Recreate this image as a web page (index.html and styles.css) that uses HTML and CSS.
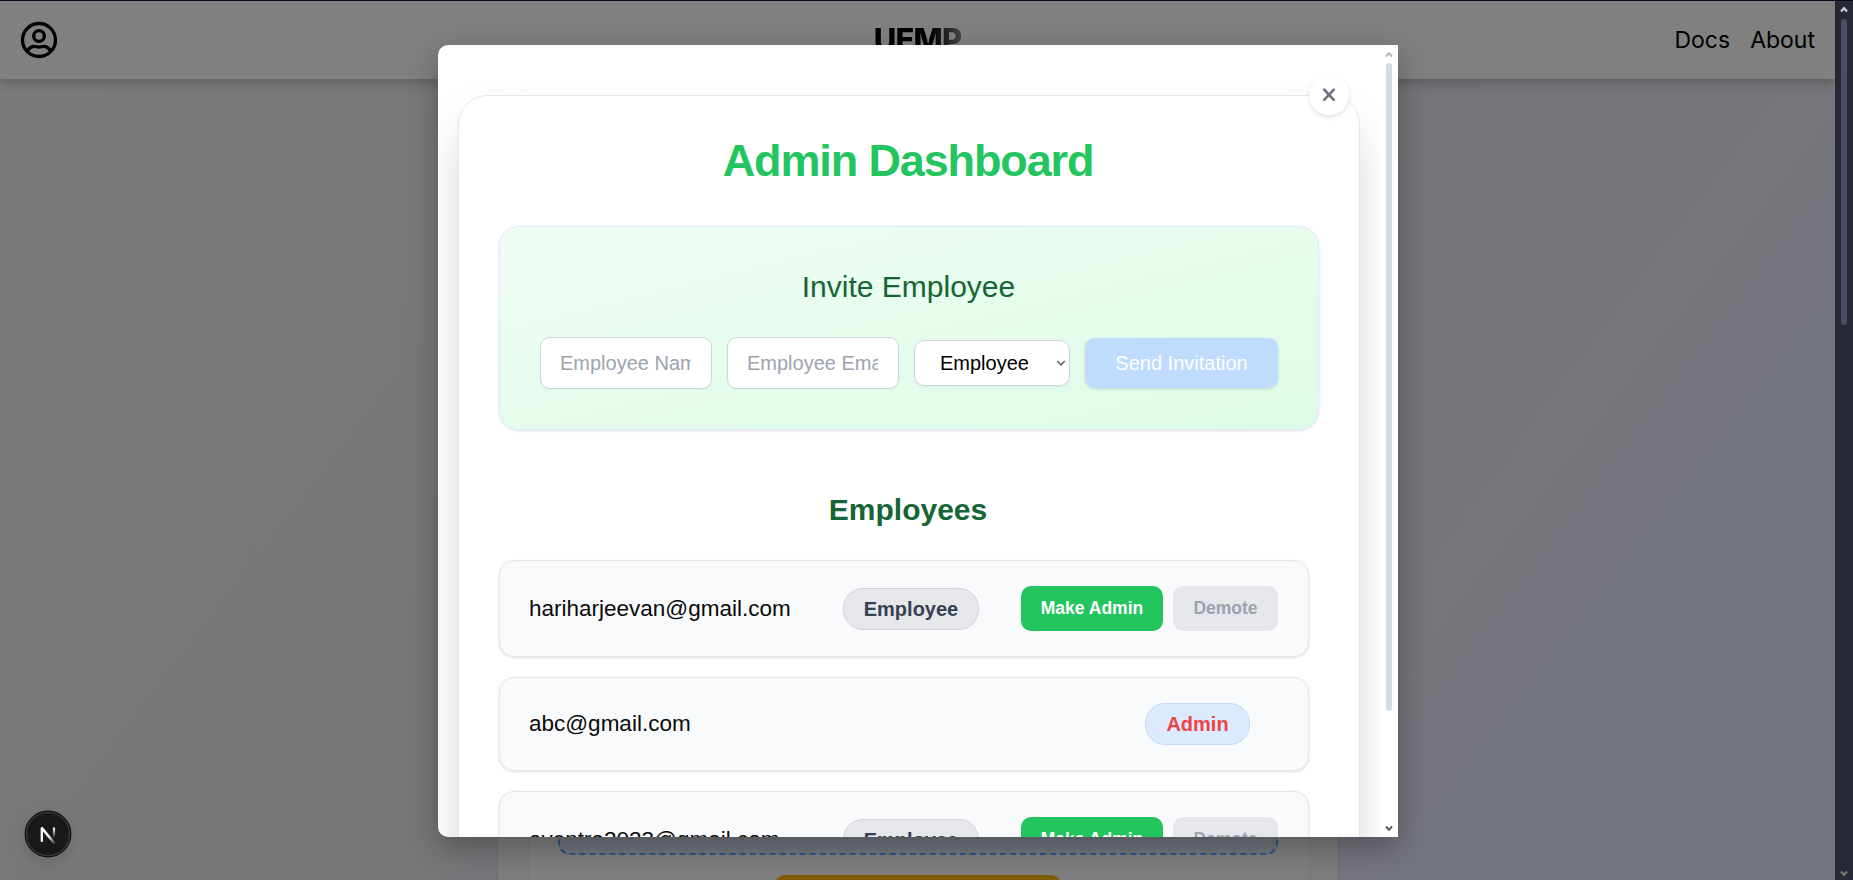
FILE: index.html
```html
<!DOCTYPE html>
<html lang="en">
<head>
<meta charset="utf-8">
<title>UEMP</title>
<link rel="stylesheet" href="styles.css">
</head>
<body>
<div class="page">
  <div class="view">
    <header class="nav">
      <svg class="user" viewBox="0 0 38 38" fill="none" stroke="#000" stroke-width="3.3" stroke-linecap="round"><circle cx="19" cy="19" r="16.5"/><circle cx="19" cy="15" r="5.3"/><path d="M7.3 29.6C10.5 25.2 14 24.9 16.3 25.7Q19 26.5 21.7 25.7C24 24.9 27.5 25.2 30.7 29.6"/></svg>
      <div class="logo">UEMP</div>
      <nav class="links"><span>Docs</span><span>About</span></nav>
    </header>
    <main class="backdrop">
      <section class="outer">
        <div class="inner">
          <div class="drop"></div>
          <div class="gold"></div>
        </div>
      </section>
    </main>
  </div>
  <aside class="pagebar">
    <svg class="arrow" viewBox="0 0 8 7"><path d="M1 5.5L4 2.2L7 5.5" fill="none" stroke="#d0d0d0" stroke-width="2.2"/></svg>
    <div class="pagethumb"></div>
    <svg class="arrow end" viewBox="0 0 8 7"><path d="M1 1.5L4 4.8L7 1.5" fill="none" stroke="#77776f" stroke-width="2.2"/></svg>
  </aside>

  <div class="modal">
    <div class="scroll">
      <div class="card">
        <button class="close" aria-label="Close"><svg viewBox="0 0 14 14"><path d="M2.2 1.6L11.8 11.8M11.8 1.6L2.2 11.8" stroke="#6b7280" stroke-width="2.6" stroke-linecap="round"/></svg></button>
        <h1>Admin Dashboard</h1>
        <section class="invite">
          <h2>Invite Employee</h2>
          <div class="form">
            <div class="field"><span>Employee Name</span></div>
            <div class="field"><span>Employee Email</span></div>
            <div class="select"><span>Employee</span><svg viewBox="0 0 10 8"><path d="M1.2 2L5 5.8L8.8 2" fill="none" stroke="#666" stroke-width="1.6"/></svg></div>
            <div class="send">Send Invitation</div>
          </div>
        </section>
        <h2 class="bold">Employees</h2>
        <div class="list">
          <div class="row"><span class="mail">hariharjeevan@gmail.com</span><span class="badge">Employee</span><span class="btn">Make Admin</span><span class="btn off">Demote</span></div>
          <div class="row"><span class="mail">abc@gmail.com</span><span class="badge admin">Admin</span></div>
          <div class="row"><span class="mail">aventra2023@gmail.com</span><span class="badge">Employee</span><span class="btn">Make Admin</span><span class="btn off">Demote</span></div>
        </div>
      </div>
    </div>
    <div class="bar">
      <svg class="arrow" viewBox="0 0 8 7"><path d="M1 5.5L4 2.2L7 5.5" fill="none" stroke="#b4b4b4" stroke-width="1.9"/></svg>
      <div class="thumb"></div>
      <svg class="arrow end" viewBox="0 0 8 7"><path d="M1 1.5L4 4.8L7 1.5" fill="none" stroke="#555" stroke-width="1.9"/></svg>
    </div>
  </div>

  <div class="dev"><svg viewBox="0 0 48 48">
    <defs>
      <linearGradient id="a" x1="0" y1="18" x2="0" y2="28" gradientUnits="userSpaceOnUse"><stop stop-color="#fff"/><stop offset="1" stop-color="#fff" stop-opacity="0"/></linearGradient>
      <linearGradient id="b" x1="25" y1="26" x2="32" y2="34" gradientUnits="userSpaceOnUse"><stop stop-color="#fff"/><stop offset="1" stop-color="#fff" stop-opacity="0"/></linearGradient>
    </defs>
    <circle cx="24" cy="24" r="23.5" fill="#0a0a0a"/><circle cx="24" cy="24" r="21.7" fill="#191919" stroke="#3c3c3c" stroke-width="1.3"/>
    <path d="M17.8 31.8V17.5" stroke="#fff" stroke-width="2.3"/><path d="M17.5 17.6L31 34" stroke="url(#b)" stroke-width="2.5"/><path d="M30 17.5V28" stroke="url(#a)" stroke-width="2.2"/>
  </svg></div>
</div>
</body>
</html>
```
FILE: styles.css
```css
* { box-sizing: border-box; }
body { margin: 0; font-family: "Liberation Sans", Arial, sans-serif; overflow: hidden; }
.page { position: relative; width: 1853px; height: 880px; display: flex; border-top: 1px solid #0a0a1e; overflow: hidden; }
.view { flex: 1; display: flex; flex-direction: column; background: linear-gradient(to bottom right, #7a7a7a 0%, #78787a 20%, #757579 38%, #75757a 52%, #74747e 55%, #71757e 58%, #71767f 100%) 0 0 / 1835px 2400px no-repeat; }
.nav { position: relative; flex: none; height: 78px; background: #808080; display: grid; grid-template-columns: 1fr auto 1fr; align-items: center; padding: 0 20px; box-shadow: 0 4px 10px rgba(0,0,0,.2); }
.user { width: 38px; height: 38px; display: block; }
.logo { font: 800 31px/40px Inter, sans-serif; letter-spacing: -0.8px; background: linear-gradient(90deg, #000 65%, #444); -webkit-background-clip: text; background-clip: text; color: transparent; }
.links { display: flex; justify-content: flex-end; gap: 20px; font: 23px/30px Inter, sans-serif; color: #000; }
.backdrop { flex: 1; min-height: 0; display: flex; justify-content: center; overflow: hidden; }
.outer { width: 840px; background: #7d7d7d; padding: 0 29px 0 30px; box-shadow: 0 0 2px rgba(0,0,0,.2); }
.inner { height: 100%; background: #7f7f7f; border: 1px solid #797979; border-width: 0 1px; padding: 0 30px 0 29px; display: flex; flex-direction: column; align-items: center; }
.drop { flex: none; width: 100%; height: 776px; border: 2px dashed #2c5587; border-radius: 12px; background: #71767d; }
.gold { width: 288px; height: 40px; flex: none; margin-top: 20px; border-radius: 12px; background: #805c05; }
.pagebar { width: 18px; background: #262a36; display: flex; flex-direction: column; align-items: center; padding: 5px 0 3px; }
.arrow { width: 8px; height: 7px; flex: none; display: block; }
.end { margin-top: auto; }
.pagethumb { width: 6px; height: 306px; margin-top: 6px; border-radius: 3px; background: #4b4d66; }

.modal { position: absolute; left: 438px; top: 44px; width: 960px; height: 792px; display: flex; background: #fff; border-radius: 10px 0 0 10px; overflow: hidden; box-shadow: 0 10px 30px rgba(0,0,0,.3); }
.scroll { flex: 1; padding: 50px 20px 0; overflow: hidden; }
.bar { width: 18px; background: #fff; display: flex; flex-direction: column; align-items: center; padding: 6px 0 5px; }
.thumb { width: 6px; height: 648px; margin-top: 5px; border-radius: 3px; background: #d2dce4; }
.card { position: relative; height: 1000px; border: 1px solid #e5e7eb; border-radius: 30px; padding: 40px; background: #fff; box-shadow: 0 25px 50px -12px rgba(0,0,0,.25); }
.close { position: absolute; right: 10px; top: -21px; width: 40px; height: 40px; padding: 0; border: 0; border-radius: 50%; background: #fff; display: grid; place-items: center; box-shadow: 0 2px 5px rgba(0,0,0,.12); }
.close svg { width: 14px; height: 14px; }
h1 { margin: 0 2px 40px 0; font-size: 45px; line-height: 50px; letter-spacing: -1.125px; color: #22c55e; text-align: center; }
h2 { margin: 0 1px 30px 0; font-size: 30px; line-height: 40px; font-weight: 400; color: #166534; text-align: center; }
.invite { height: 204px; padding: 40px; border: 1px solid #dbeafe; border-radius: 20px; background: linear-gradient(to bottom right, #f0fdf4, #dcfce7); box-shadow: 0 1px 3px rgba(0,0,0,.12); }
.form { display: flex; align-items: center; gap: 15px; font-size: 20px; }
.field { width: 172px; height: 52px; padding: 0 20px 0 19px; border: 1px solid #d1d5db; border-radius: 10px; background: #fff; color: #9ca3af; box-shadow: 0 1px 2px rgba(0,0,0,.05); }
.field span { display: block; overflow: hidden; white-space: nowrap; line-height: 50px; }
.select { width: 156px; height: 46px; display: flex; align-items: center; justify-content: space-between; padding: 0 3px 0 25px; border: 1px solid #d1d5db; border-radius: 10px; background: #fff; color: #000; box-shadow: 0 1px 2px rgba(0,0,0,.05); }
.select svg { width: 10px; height: 8px; }
.send { flex: 1; height: 50px; line-height: 50px; text-align: center; border-radius: 10px; background: #bfdbfe; color: #fff; box-shadow: 0 1px 3px rgba(0,0,0,.15); }
.bold { margin: 60px 2px 30px 0; font-weight: 700; }
.list { display: flex; flex-direction: column; gap: 20px; padding-right: 10px; }
.row { display: flex; align-items: center; padding: 25px 30px 25px 29px; border: 1px solid #e5e7eb; border-radius: 15px; background: #f9fafb; box-shadow: 0 1px 3px rgba(0,0,0,.12); }
.mail { width: 314px; font-size: 22.5px; line-height: 30px; color: #0a0a0a; }
.badge { width: 136px; height: 42px; line-height: 40px; margin-right: 42px; text-align: center; font-size: 20px; font-weight: 700; border: 1px solid #d1d5db; border-radius: 20px; background: #e5e7eb; color: #374151; }
.admin { width: 105px; margin: 0 28px 0 auto; border-color: #bfdbfe; background: #dbeafe; color: #ef4444; }
.btn { width: 142px; height: 45px; line-height: 44px; text-align: center; font-size: 17.5px; font-weight: 700; border-radius: 10px; background: #22c55e; color: #fff; }
.off { width: 105px; margin-left: 10px; background: #e5e7eb; color: #9ca3af; }
.dev { position: absolute; left: 23.5px; top: 808.5px; width: 48px; height: 48px; border-radius: 50%; box-shadow: 0 4px 14px rgba(0,0,0,.12); }
.dev svg { display: block; width: 48px; height: 48px; }
```
